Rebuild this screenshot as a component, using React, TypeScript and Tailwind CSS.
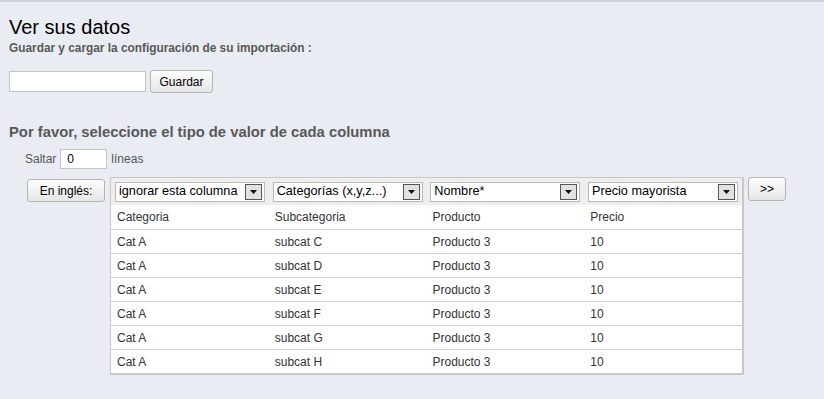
import type { ReactNode } from "react";

const columns = ["ignorar esta columna", "Categorías (x,y,z...)", "Nombre*", "Precio mayorista"];
const header = ["Categoria", "Subcategoria", "Producto", "Precio"];
const rows = ["C", "D", "E", "F", "G", "H"].map((l) => ["Cat A", `subcat ${l}`, "Producto 3", "10"]);

function FakeSelect({ label }: { label: string }) {
  return (
    <div className="flex h-[20px] w-[150px] items-center justify-between border border-[#b9b9b9] bg-white pl-[3px] pr-[2px]">
      <span className="text-[12.7px] leading-none text-black">{label}</span>
      <span className="flex h-[16px] w-[17px] items-center justify-center border border-[#555] bg-[#e2e2e2]">
        <svg width="7" height="4" viewBox="0 0 7 4">
          <path d="M0 0h7L3.5 4z" fill="#111" />
        </svg>
      </span>
    </div>
  );
}

function Btn({ children, className }: { children: ReactNode; className: string }) {
  return (
    <button
      type="button"
      className={
        "rounded-[3px] border border-[#b5b5b5] bg-gradient-to-b from-[#fdfdfd] to-[#e6e6e6] text-[12px] text-black " +
        className
      }
    >
      {children}
    </button>
  );
}

export default function App() {
  return (
    <div
      className="min-h-[399px] border-t-2 border-[#cfd0d8] bg-[#e9ecf3] px-[9px] pt-[13px]"
      style={{ fontFamily: '"Liberation Sans", Arial, sans-serif' }}
    >
      <h1 className="text-[20px] leading-[24px] text-black">Ver sus datos</h1>
      <p className="mt-[2px] text-[11.85px] font-bold leading-[14px] text-[#585858]">
        Guardar y cargar la configuración de su importación :
      </p>

      <div className="mt-[15px] flex items-center gap-[4px]">
        <input className="h-[21px] w-[137px] border border-[#c4c4c4] bg-white" />
        <Btn className="h-[23px] w-[63px]">Guardar</Btn>
      </div>

      <h2 className="mt-[30px] text-[14.8px] font-bold leading-[18px] text-[#585858]">
        Por favor, seleccione el tipo de valor de cada columna
      </h2>

      <div className="mt-[8px] flex items-center pl-[16px] text-[12px] text-[#555]">
        <span>Saltar</span>
        <input
          defaultValue="0"
          className="ml-[4px] h-[20px] w-[47px] border border-[#c4c4c4] bg-white pl-[6px] text-[12px] text-black"
        />
        <span className="ml-[4px]">líneas</span>
      </div>

      <div className="mt-[8px] flex items-start">
        <Btn className="mt-[2px] ml-[18px] h-[23px] w-[78px]">En inglés:</Btn>
        <div className="ml-[5px] w-[634px] border border-[#c8c8c8] border-r-2 border-b-2 bg-white">
          <div className="flex h-[27px] items-center justify-between bg-[#eeeeee] px-[4px]">
            {columns.map((c) => (
              <FakeSelect key={c} label={c} />
            ))}
          </div>
          {[header, ...rows].map((r, i) => (
            <div
              key={i}
              className={"grid h-[24px] grid-cols-4 items-center text-[12px] text-[#333] " + (i > 0 ? "border-t border-[#d0d0d0]" : "")}
            >
              {r.map((cell, j) => (
                <span key={j} className="pl-[6px]">
                  {cell}
                </span>
              ))}
            </div>
          ))}
        </div>
        <Btn className="ml-[4px] h-[24px] w-[38px] text-[10px]">&gt;&gt;</Btn>
      </div>
    </div>
  );
}
